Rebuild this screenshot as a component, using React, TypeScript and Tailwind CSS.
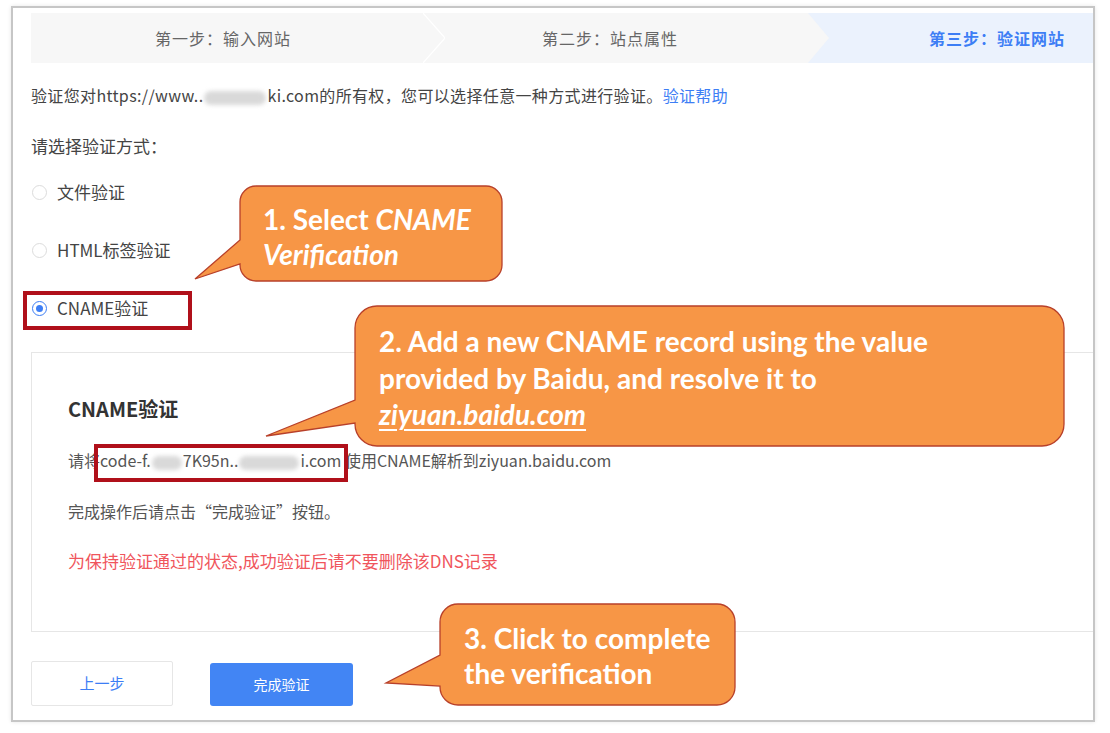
import React from 'react';

const cjk = { fontFamily: '"Noto Sans CJK SC", "Noto Sans", sans-serif' };
const callFont = { fontFamily: 'Lato, "Open Sans", sans-serif' };

function bubblePath(
  x: number,
  y: number,
  w: number,
  h: number,
  r: number,
  a1: number,
  a2: number,
  tx: number,
  ty: number,
) {
  return [
    `M ${x + r} ${y}`,
    `H ${x + w - r}`,
    `A ${r} ${r} 0 0 1 ${x + w} ${y + r}`,
    `V ${y + h - r}`,
    `A ${r} ${r} 0 0 1 ${x + w - r} ${y + h}`,
    `H ${x + r}`,
    `A ${r} ${r} 0 0 1 ${x} ${y + h - r}`,
    `V ${a2}`,
    `L ${tx} ${ty}`,
    `L ${x} ${a1}`,
    `V ${y + r}`,
    `A ${r} ${r} 0 0 1 ${x + r} ${y}`,
    'Z',
  ].join(' ');
}

function Blur({ w }: { w: number }) {
  return (
    <span
      className="mx-[1px] inline-block h-[14px] rounded-full bg-[#d9d9d9] align-middle blur-[2px]"
      style={{ width: w }}
    />
  );
}

function Radio({ label, checked }: { label: string; checked?: boolean }) {
  return (
    <label className="flex h-6 items-center text-[17px] text-[#444]">
      <span
        className={
          checked
            ? 'ml-[1px] mr-[10px] flex h-[15px] w-[15px] items-center justify-center rounded-full border border-[#3d7ef5]'
            : 'ml-[1px] mr-[10px] h-[15px] w-[15px] rounded-full border border-[#dcdcdc]'
        }
      >
        {checked && <span className="h-[7px] w-[7px] rounded-full bg-[#3d7ef5]" />}
      </span>
      {label}
    </label>
  );
}

export default function App() {
  return (
    <div className="relative h-[733px] w-[1110px] overflow-hidden bg-white pl-[11px] pt-[6px]" style={cjk}>
      <div className="flex h-[716px] w-[1084px] flex-col border-2 border-[#c6c6c6] pl-[18px] shadow-[0_0_4px_rgba(0,0,0,0.1)]">
        {/* steps */}
        <div className="mt-[5px] flex h-[50px] bg-[#f7f7f7] text-[16px] tracking-[1px] text-[#666]">
          <div className="flex w-[392px] items-center pl-[124px]">第一步：输入网站</div>
          <svg width="22" height="50" viewBox="0 0 22 50" className="shrink-0">
            <polyline points="0,0 22,25 0,50" fill="none" stroke="#ffffff" strokeWidth="1.2" />
          </svg>
          <div className="flex w-[363px] items-center pl-[97px]">第二步：站点属性</div>
          <svg width="21" height="50" viewBox="0 0 21 50" className="shrink-0 bg-[#ebf2fd]">
            <polygon points="0,0 21,25 0,50" fill="#f7f7f7" />
          </svg>
          <div className="flex flex-1 items-center bg-[#ebf2fd] pl-[100px] font-bold text-[#3d7ef5]">
            第三步：验证网站
          </div>
        </div>

        <p className="mt-5 h-6 text-[16px] leading-6 tracking-[0.35px] text-[#444]">
          验证您对https://www..
          <Blur w={62} />
          ki.com的所有权，您可以选择任意一种方式进行验证。
          <span className="text-[#3d7ef5]">验证帮助</span>
        </p>

        <p className="mt-[27px] h-6 text-[17px] leading-6 text-[#444]">请选择验证方式：</p>

        <div className="mt-[22px] flex flex-col gap-[34px]">
          <Radio label="文件验证" />
          <Radio label="HTML标签验证" />
          <Radio label="CNAME验证" checked />
        </div>

        <div className="mt-8 h-[280px] border border-r-0 border-[#e6e6e6] pl-[36px] pt-[43px]">
          <h3 className="h-[26px] text-[20px] font-bold leading-[26px] text-[#333]">CNAME验证</h3>
          <p className="mt-[26px] h-6 text-[16px] leading-6 text-[#555]">
            请将code-f.
            <Blur w={30} />
            7K95n..
            <Blur w={60} />
            i.com 使用CNAME解析到ziyuan.baidu.com
          </p>
          <p className="mt-[27px] h-6 text-[16px] leading-6 text-[#555]">完成操作后请点击“完成验证”按钮。</p>
          <p className="mt-[26px] h-6 text-[17px] leading-6 text-[#f0555c]">
            为保持验证通过的状态,成功验证后请不要删除该DNS记录
          </p>
        </div>

        <div className="mt-[29px] flex items-end gap-[37px]">
          <button
            type="button"
            className="flex h-[45px] w-[142px] items-center justify-center rounded-[2px] border border-[#e6e6e6] bg-white text-[15px] text-[#3d7ef5]"
          >
            上一步
          </button>
          <button
            type="button"
            className="flex h-[43px] w-[143px] items-center justify-center rounded-[3px] bg-[#4285f4] text-[14px] text-white"
          >
            完成验证
          </button>
        </div>
      </div>

      {/* annotation highlights */}
      <div className="absolute left-[23px] top-[291px] h-[39px] w-[169px] border-[4px] border-[#b0101a]" />
      <div className="absolute left-[94px] top-[444px] h-[38px] w-[254px] border-[4px] border-[#b0101a]" />

      {/* callouts */}
      <svg className="pointer-events-none absolute left-0 top-0" width="1110" height="733">
        <path d={bubblePath(240, 186, 262, 95, 16, 240, 264, 195, 279)} fill="#f79646" stroke="#b8402a" strokeWidth="1.3" />
        <path d={bubblePath(355, 306, 709, 140, 22, 400, 423, 266, 436)} fill="#f79646" stroke="#b8402a" strokeWidth="1.3" />
        <path d={bubblePath(440, 604, 295, 101, 18, 655, 686, 386, 683)} fill="#f79646" stroke="#b8402a" strokeWidth="1.3" />
      </svg>

      <div className="absolute left-[263px] top-[202px] text-[28px] font-bold leading-[35px] text-white" style={callFont}>
        <div>
          1. Select <i>CNAME</i>
        </div>
        <div>
          <i>Verification</i>
        </div>
      </div>

      <div className="absolute left-[379px] top-[323px] text-[28px] font-bold leading-[36.5px] text-white" style={callFont}>
        <div>2. Add a new CNAME record using the value</div>
        <div>provided by Baidu, and resolve it to</div>
        <div>
          <i className="underline decoration-2 underline-offset-4">ziyuan.baidu.com</i>
        </div>
      </div>

      <div className="absolute left-[464px] top-[621px] text-[28px] font-bold leading-[35px] text-white" style={callFont}>
        <div>3. Click to complete</div>
        <div>the verification</div>
      </div>
    </div>
  );
}
